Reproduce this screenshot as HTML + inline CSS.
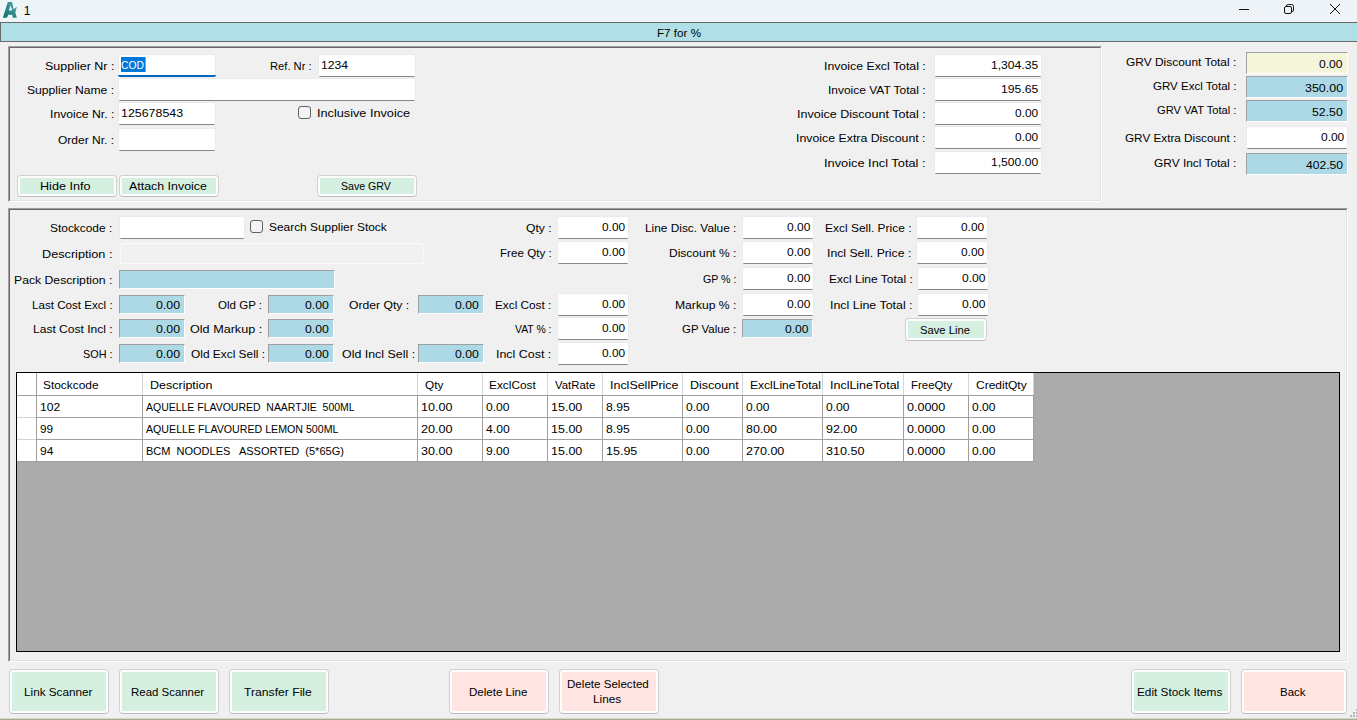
<!DOCTYPE html>
<html><head><meta charset="utf-8"><title>1</title>
<style>
*{box-sizing:border-box;margin:0;padding:0}
html,body{width:1357px;height:720px;overflow:hidden;background:#f0f0f0;font-family:"Liberation Sans",sans-serif;font-size:11px;color:#000}
.a{position:absolute}
.t{position:absolute;white-space:pre;line-height:16px;height:16px;transform-origin:0 0}
.tb{position:absolute;background:#fff;border-bottom:1px solid #868686;box-shadow:-1px -1px 0 0 #ebebeb,1px -1px 0 0 #ebebeb;border-radius:1.5px;height:22px}
.ro{position:absolute;background:#add8e6;border-top:1px solid #a0a0a0;border-left:1px solid #a0a0a0;border-bottom:1px solid #fff;border-right:1px solid #fff}
.btn{position:absolute;border:1px solid #d0d0d0;border-bottom-color:#bdbdbd;border-radius:4px;background:#fdfdfd;padding:2px}
.btn>div{width:100%;height:100%}
.g>div{background:#d5f0e1}.p>div{background:#ffe4e1}
.sb{width:100px;height:22px}.bb{width:100px;height:45px;top:669px}
.panel{position:absolute;border-style:solid;border-width:1px;border-color:#a0a0a0 #fff #fff #a0a0a0}
.panel:before{content:"";position:absolute;left:0;top:0;right:0;bottom:0;border-style:solid;border-width:1px;border-color:#696969 #e3e3e3 #e3e3e3 #696969}
.cb{position:absolute;width:13px;height:13px;border:1px solid #626262;border-radius:3px;background:#f3f3f3}
.s{width:66px;height:19px}
.w70{width:70px}
.v,.h{position:absolute;background:#a0a0a0}
.v{width:1px}.h{height:1px}
</style></head><body>
<!-- title bar -->
<div class="a" style="left:0;top:0;width:1357px;height:22px;background:#eff4f9"></div>
<svg class="a" style="left:0;top:0" width="20" height="20" viewBox="0 0 20 20"><defs><linearGradient id="ig" x1="0" y1="1" x2="1" y2="0"><stop offset="0" stop-color="#04706f"/><stop offset="1" stop-color="#5aa5a4"/></linearGradient></defs><path d="M2.9 17.8 L7.8 2.1 L12.2 2.1 L13.6 9.3 L16.9 6.8 L15.3 12.6 L16.9 17.8 L12.9 17.8 L12.2 14.7 L8.3 14.7 L6.9 17.8 Z M10.2 5.3 L9.0 11.0 L12.4 9.9 Z" fill="url(#ig)" fill-rule="evenodd"/></svg>
<svg class="a" style="left:1230px;top:0" width="127" height="22" viewBox="0 0 127 22"><g fill="none" stroke="#111" stroke-width="1"><path d="M9 9.5 H19"/><rect x="54.5" y="6.5" width="7" height="7" rx="1.5"/><path d="M56.5 6 Q56.6 4.5 58.2 4.5 H61.5 Q63.5 4.5 63.5 6.5 V10 Q63.5 11.4 62 11.5"/><path d="M100 4 L110 14 M110 4 L100 14"/></g></svg>
<!-- blue strip -->
<div class="a" style="left:0;top:22px;width:1357px;height:20px;background:#b0e0e6;border:1px solid #696969;border-right:0"></div>

<!-- panel 1 -->
<div class="panel" style="left:8px;top:46px;width:1094px;height:156px"></div>
<div class="tb" style="left:119px;top:55px;width:96px;border-bottom-color:#fff"></div>
<div class="a" style="left:118px;top:74px;width:98px;height:3px;border-bottom:2px solid #0067c0;border-radius:0 0 2px 2px"></div>
<div class="a" style="left:121px;top:57px;width:24px;height:15px;background:#0078d7"></div>
<div class="a" style="left:145px;top:57px;width:1px;height:15px;background:#ff8c28"></div>
<div class="tb" style="left:319px;top:55px;width:96px"></div>
<div class="tb" style="left:119px;top:79px;width:296px"></div>
<div class="tb" style="left:119px;top:103px;width:96px"></div>
<div class="cb" style="left:298px;top:106px"></div>
<div class="tb" style="left:119px;top:129px;width:96px"></div>
<div class="btn g sb" style="left:17px;top:175px"><div></div></div>
<div class="btn g sb" style="left:119px;top:175px"><div></div></div>
<div class="btn g sb" style="left:317px;top:175px"><div></div></div>

<div class="tb" style="left:935px;top:55px;width:106px"></div>
<div class="tb" style="left:935px;top:79px;width:106px"></div>
<div class="tb" style="left:935px;top:103px;width:106px"></div>
<div class="tb" style="left:935px;top:127px;width:106px"></div>
<div class="tb" style="left:935px;top:152px;width:106px"></div>

<!-- GRV right column -->
<div class="ro" style="left:1246px;top:52px;width:102px;height:22px;background:#f5f5dc"></div>
<div class="ro" style="left:1246px;top:76px;width:102px;height:22px"></div>
<div class="ro" style="left:1246px;top:100px;width:102px;height:22px"></div>
<div class="tb" style="left:1247px;top:127px;width:100px"></div>
<div class="ro" style="left:1246px;top:153px;width:102px;height:22px"></div>

<!-- panel 2 -->
<div class="panel" style="left:8px;top:208px;width:1340px;height:454px"></div>
<div class="tb" style="left:120px;top:217px;width:124px"></div>
<div class="cb" style="left:250px;top:220px"></div>
<div class="a" style="left:120px;top:243px;width:304px;height:21px;border:1px solid #fafafa;border-radius:2px;background:#f1f1f1"></div>
<div class="ro" style="left:119px;top:270px;width:216px;height:19px"></div>

<div class="ro s" style="left:119px;top:295px"></div>
<div class="ro s" style="left:119px;top:319px"></div>
<div class="ro s" style="left:119px;top:344px"></div>
<div class="ro s" style="left:268px;top:295px"></div>
<div class="ro s" style="left:268px;top:319px"></div>
<div class="ro s" style="left:268px;top:344px"></div>
<div class="ro s" style="left:418px;top:295px"></div>
<div class="ro s" style="left:418px;top:344px"></div>

<div class="tb w70" style="left:558px;top:217px"></div>
<div class="tb w70" style="left:558px;top:242px"></div>
<div class="tb w70" style="left:558px;top:294px"></div>
<div class="tb w70" style="left:558px;top:318px"></div>
<div class="tb w70" style="left:558px;top:343px"></div>

<div class="tb w70" style="left:743px;top:217px"></div>
<div class="tb w70" style="left:743px;top:242px"></div>
<div class="tb w70" style="left:743px;top:268px"></div>
<div class="tb w70" style="left:743px;top:294px"></div>
<div class="ro s" style="left:742px;top:319px;width:71px"></div>

<div class="tb w70" style="left:917px;top:217px"></div>
<div class="tb w70" style="left:917px;top:242px"></div>
<div class="tb w70" style="left:918px;top:268px"></div>
<div class="tb w70" style="left:918px;top:294px"></div>
<div class="btn g" style="left:905px;top:318px;width:82px;height:23px"><div></div></div>

<!-- grid -->
<div class="a" style="left:16px;top:372px;width:1324px;height:280px;background:#ababab;border:1px solid #000"></div>
<div class="a" style="left:17px;top:373px;width:1017px;height:89px;background:#fff"></div>
<div class="v" style="left:36px;top:373px;height:89px"></div>
<div class="v" style="left:142px;top:373px;height:22px;background:#d4d4d4"></div>
<div class="v" style="left:142px;top:395px;height:67px"></div>
<div class="v" style="left:417px;top:373px;height:22px;background:#d4d4d4"></div>
<div class="v" style="left:417px;top:395px;height:67px"></div>
<div class="v" style="left:482px;top:373px;height:22px;background:#d4d4d4"></div>
<div class="v" style="left:482px;top:395px;height:67px"></div>
<div class="v" style="left:547px;top:373px;height:22px;background:#d4d4d4"></div>
<div class="v" style="left:547px;top:395px;height:67px"></div>
<div class="v" style="left:602px;top:373px;height:22px;background:#d4d4d4"></div>
<div class="v" style="left:602px;top:395px;height:67px"></div>
<div class="v" style="left:682px;top:373px;height:22px;background:#d4d4d4"></div>
<div class="v" style="left:682px;top:395px;height:67px"></div>
<div class="v" style="left:742px;top:373px;height:22px;background:#d4d4d4"></div>
<div class="v" style="left:742px;top:395px;height:67px"></div>
<div class="v" style="left:822px;top:373px;height:22px;background:#d4d4d4"></div>
<div class="v" style="left:822px;top:395px;height:67px"></div>
<div class="v" style="left:903px;top:373px;height:22px;background:#d4d4d4"></div>
<div class="v" style="left:903px;top:395px;height:67px"></div>
<div class="v" style="left:968px;top:373px;height:22px;background:#d4d4d4"></div>
<div class="v" style="left:968px;top:395px;height:67px"></div>
<div class="v" style="left:1033px;top:373px;height:22px;background:#d4d4d4"></div>
<div class="v" style="left:1033px;top:395px;height:67px"></div>
<div class="h" style="left:17px;top:395px;width:1017px"></div>
<div class="h" style="left:37px;top:417px;width:997px"></div>
<div class="h" style="left:17px;top:417px;width:19px;background:#d4d4d4"></div>
<div class="h" style="left:37px;top:439px;width:997px"></div>
<div class="h" style="left:17px;top:439px;width:19px;background:#d4d4d4"></div>
<div class="h" style="left:17px;top:461px;width:1017px"></div>

<!-- bottom buttons -->
<div class="btn g bb" style="left:9px"><div></div></div>
<div class="btn g bb" style="left:119px"><div></div></div>
<div class="btn g bb" style="left:229px"><div></div></div>
<div class="btn p bb" style="left:449px"><div></div></div>
<div class="btn p bb" style="left:559px"><div></div></div>
<div class="btn g bb" style="left:1131px"><div></div></div>
<div class="btn p bb" style="left:1241px;width:106px"><div></div></div>
<div class="a" style="left:0;top:718px;width:1357px;height:1px;background:#d6d6c8"></div>
<div class="a" style="left:0;top:719px;width:1357px;height:1px;background:#a9aa90"></div>
<svg class="a" style="left:1349px;top:708px" width="8" height="10" viewBox="0 0 8 10" fill="#b4b4b4"><rect x="7" y="1" width="2" height="2"/><rect x="4" y="4" width="2" height="2"/><rect x="7" y="4" width="2" height="2"/><rect x="1" y="7" width="2" height="2"/><rect x="4" y="7" width="2" height="2"/><rect x="7" y="7" width="2" height="2"/></svg>
<div class="t" style="left:23.71px;top:3.00px;font-size:12px">1</div>
<div class="t" style="left:656.50px;top:25.00px;transform:scaleX(1.0580)">F7 for %</div>
<div class="t" style="left:44.96px;top:58.00px;transform:scaleX(1.1354)">Supplier Nr :</div>
<div class="t" style="left:27.32px;top:82.00px;transform:scaleX(1.1042)">Supplier Name :</div>
<div class="t" style="left:49.83px;top:106.00px;transform:scaleX(1.1086)">Invoice Nr. :</div>
<div class="t" style="left:57.76px;top:132.00px;transform:scaleX(1.0903)">Order Nr. :</div>
<div class="t" style="left:270.16px;top:58.00px;transform:scaleX(1.0153)">Ref. Nr :</div>
<div class="t" style="left:121.29px;top:57.00px;transform:scaleX(0.9367);color:#fff">COD</div>
<div class="t" style="left:321.05px;top:57.00px;transform:scaleX(1.1069)">1234</div>
<div class="t" style="left:121.22px;top:105.00px;transform:scaleX(1.1284)">125678543</div>
<div class="t" style="left:317.15px;top:105.00px;transform:scaleX(1.1542)">Inclusive Invoice</div>
<div class="t" style="left:40.35px;top:178.00px;transform:scaleX(1.1453)">Hide Info</div>
<div class="t" style="left:128.85px;top:178.00px;transform:scaleX(1.1277)">Attach Invoice</div>
<div class="t" style="left:341.07px;top:178.00px;transform:scaleX(0.9643)">Save GRV</div>
<div class="t" style="left:823.57px;top:58.00px;transform:scaleX(1.1199)">Invoice Excl Total :</div>
<div class="t" style="left:827.89px;top:82.00px;transform:scaleX(1.0873)">Invoice VAT Total :</div>
<div class="t" style="left:796.79px;top:106.00px;transform:scaleX(1.1398)">Invoice Discount Total :</div>
<div class="t" style="left:795.57px;top:130.00px;transform:scaleX(1.1210)">Invoice Extra Discount :</div>
<div class="t" style="left:823.95px;top:155.00px;transform:scaleX(1.1639)">Invoice Incl Total :</div>
<div class="t" style="left:990.86px;top:57.00px;transform:scaleX(1.1020)">1,304.35</div>
<div class="t" style="left:1001.43px;top:81.00px;transform:scaleX(1.1103)">195.65</div>
<div class="t" style="left:1014.76px;top:105.00px;transform:scaleX(1.0772)">0.00</div>
<div class="t" style="left:1014.76px;top:129.00px;transform:scaleX(1.0772)">0.00</div>
<div class="t" style="left:990.86px;top:154.00px;transform:scaleX(1.1014)">1,500.00</div>
<div class="t" style="left:1126.38px;top:54.00px;transform:scaleX(1.0841)">GRV Discount Total :</div>
<div class="t" style="left:1153.08px;top:78.00px;transform:scaleX(1.0483)">GRV Excl Total :</div>
<div class="t" style="left:1157.10px;top:102.00px;transform:scaleX(1.0112)">GRV VAT Total :</div>
<div class="t" style="left:1124.69px;top:130.00px;transform:scaleX(1.0660)">GRV Extra Discount :</div>
<div class="t" style="left:1153.86px;top:155.00px;transform:scaleX(1.0820)">GRV Incl Total :</div>
<div class="t" style="left:1319.26px;top:56.00px;transform:scaleX(1.1006)">0.00</div>
<div class="t" style="left:1305.07px;top:80.00px;transform:scaleX(1.1327)">350.00</div>
<div class="t" style="left:1311.87px;top:104.00px;transform:scaleX(1.1183)">52.50</div>
<div class="t" style="left:1321.12px;top:129.00px;transform:scaleX(1.0860)">0.00</div>
<div class="t" style="left:1305.89px;top:157.00px;transform:scaleX(1.1018)">402.50</div>
<div class="t" style="left:50.13px;top:220.00px;transform:scaleX(1.0828)">Stockcode :</div>
<div class="t" style="left:42.24px;top:246.00px;transform:scaleX(1.1524)">Description :</div>
<div class="t" style="left:13.62px;top:272.00px;transform:scaleX(1.1097)">Pack Description :</div>
<div class="t" style="left:32.09px;top:297.00px;transform:scaleX(1.0555)">Last Cost Excl :</div>
<div class="t" style="left:33.03px;top:321.00px;transform:scaleX(1.0948)">Last Cost Incl :</div>
<div class="t" style="left:82.81px;top:346.00px;transform:scaleX(0.9843)">SOH :</div>
<div class="t" style="left:155.83px;top:297.00px;transform:scaleX(1.1225)">0.00</div>
<div class="t" style="left:155.83px;top:321.00px;transform:scaleX(1.1225)">0.00</div>
<div class="t" style="left:155.83px;top:346.00px;transform:scaleX(1.1225)">0.00</div>
<div class="t" style="left:268.93px;top:219.00px;transform:scaleX(1.0821)">Search Supplier Stock</div>
<div class="t" style="left:218.44px;top:297.00px;transform:scaleX(1.0496)">Old GP :</div>
<div class="t" style="left:190.07px;top:321.00px;transform:scaleX(1.1464)">Old Markup :</div>
<div class="t" style="left:190.77px;top:346.00px;transform:scaleX(1.0812)">Old Excl Sell :</div>
<div class="t" style="left:305.11px;top:297.00px;transform:scaleX(1.1151)">0.00</div>
<div class="t" style="left:305.11px;top:321.00px;transform:scaleX(1.1151)">0.00</div>
<div class="t" style="left:305.11px;top:346.00px;transform:scaleX(1.1151)">0.00</div>
<div class="t" style="left:348.68px;top:297.00px;transform:scaleX(1.1072)">Order Qty :</div>
<div class="t" style="left:341.67px;top:346.00px;transform:scaleX(1.1279)">Old Incl Sell :</div>
<div class="t" style="left:454.66px;top:297.00px;transform:scaleX(1.1120)">0.00</div>
<div class="t" style="left:454.66px;top:346.00px;transform:scaleX(1.1120)">0.00</div>
<div class="t" style="left:526.06px;top:220.00px;transform:scaleX(1.1041)">Qty :</div>
<div class="t" style="left:500.08px;top:245.00px;transform:scaleX(1.0568)">Free Qty :</div>
<div class="t" style="left:495.31px;top:297.00px;transform:scaleX(1.0716)">Excl Cost :</div>
<div class="t" style="left:515.30px;top:321.00px;transform:scaleX(0.9477)">VAT % :</div>
<div class="t" style="left:496.48px;top:346.00px;transform:scaleX(1.1304)">Incl Cost :</div>
<div class="t" style="left:601.76px;top:219.00px;transform:scaleX(1.0772)">0.00</div>
<div class="t" style="left:601.76px;top:244.00px;transform:scaleX(1.0772)">0.00</div>
<div class="t" style="left:601.76px;top:296.00px;transform:scaleX(1.0772)">0.00</div>
<div class="t" style="left:601.76px;top:320.00px;transform:scaleX(1.0772)">0.00</div>
<div class="t" style="left:601.76px;top:345.00px;transform:scaleX(1.0772)">0.00</div>
<div class="t" style="left:644.65px;top:220.00px;transform:scaleX(1.0778)">Line Disc. Value :</div>
<div class="t" style="left:668.59px;top:245.00px;transform:scaleX(1.0909)">Discount % :</div>
<div class="t" style="left:702.95px;top:271.00px;transform:scaleX(0.9653)">GP % :</div>
<div class="t" style="left:674.58px;top:297.00px;transform:scaleX(1.1034)">Markup % :</div>
<div class="t" style="left:682.33px;top:321.00px;transform:scaleX(1.0394)">GP Value :</div>
<div class="t" style="left:786.87px;top:219.00px;transform:scaleX(1.0907)">0.00</div>
<div class="t" style="left:786.87px;top:244.00px;transform:scaleX(1.0907)">0.00</div>
<div class="t" style="left:786.87px;top:270.00px;transform:scaleX(1.0907)">0.00</div>
<div class="t" style="left:786.87px;top:296.00px;transform:scaleX(1.0907)">0.00</div>
<div class="t" style="left:785.42px;top:321.00px;transform:scaleX(1.1025)">0.00</div>
<div class="t" style="left:825.10px;top:220.00px;transform:scaleX(1.0879)">Excl Sell. Price :</div>
<div class="t" style="left:827.42px;top:245.00px;transform:scaleX(1.1121)">Incl Sell. Price :</div>
<div class="t" style="left:829.03px;top:271.00px;transform:scaleX(1.0903)">Excl Line Total :</div>
<div class="t" style="left:830.04px;top:297.00px;transform:scaleX(1.1282)">Incl Line Total :</div>
<div class="t" style="left:961.49px;top:219.00px;transform:scaleX(1.0781)">0.00</div>
<div class="t" style="left:961.49px;top:244.00px;transform:scaleX(1.0781)">0.00</div>
<div class="t" style="left:961.75px;top:270.00px;transform:scaleX(1.0983)">0.00</div>
<div class="t" style="left:961.75px;top:296.00px;transform:scaleX(1.0983)">0.00</div>
<div class="t" style="left:920.18px;top:322.00px;transform:scaleX(1.0216)">Save Line</div>
<div class="t" style="left:43.20px;top:377.00px;transform:scaleX(1.0822)">Stockcode</div>
<div class="t" style="left:149.96px;top:377.00px;transform:scaleX(1.1360)">Description</div>
<div class="t" style="left:425.06px;top:377.00px;transform:scaleX(1.0748)">Qty</div>
<div class="t" style="left:489.10px;top:377.00px;transform:scaleX(1.0777)">ExclCost</div>
<div class="t" style="left:555.08px;top:377.00px;transform:scaleX(1.0328)">VatRate</div>
<div class="t" style="left:610.03px;top:377.00px;transform:scaleX(1.1321)">InclSellPrice</div>
<div class="t" style="left:689.78px;top:377.00px;transform:scaleX(1.1367)">Discount</div>
<div class="t" style="left:750.03px;top:377.00px;transform:scaleX(1.0941)">ExclLineTotal</div>
<div class="t" style="left:830.19px;top:377.00px;transform:scaleX(1.1341)">InclLineTotal</div>
<div class="t" style="left:911.12px;top:377.00px;transform:scaleX(1.0384)">FreeQty</div>
<div class="t" style="left:975.80px;top:377.00px;transform:scaleX(1.0905)">CreditQty</div>
<div class="t" style="left:40.42px;top:399.00px;transform:scaleX(1.0968)">102</div>
<div class="t" style="left:145.84px;top:399.00px;transform:scaleX(0.9524)">AQUELLE FLAVOURED  NAARTJIE  500ML</div>
<div class="t" style="left:420.61px;top:399.00px;transform:scaleX(1.1388)">10.00</div>
<div class="t" style="left:485.75px;top:399.00px;transform:scaleX(1.0983)">0.00</div>
<div class="t" style="left:550.97px;top:399.00px;transform:scaleX(1.1370)">15.00</div>
<div class="t" style="left:605.50px;top:399.00px;transform:scaleX(1.1061)">8.95</div>
<div class="t" style="left:686.03px;top:399.00px;transform:scaleX(1.0946)">0.00</div>
<div class="t" style="left:746.03px;top:399.00px;transform:scaleX(1.0946)">0.00</div>
<div class="t" style="left:826.05px;top:399.00px;transform:scaleX(1.0983)">0.00</div>
<div class="t" style="left:907.23px;top:399.00px;transform:scaleX(1.1375)">0.0000</div>
<div class="t" style="left:972.22px;top:399.00px;transform:scaleX(1.0946)">0.00</div>
<div class="t" style="left:39.71px;top:421.00px;transform:scaleX(1.0658)">99</div>
<div class="t" style="left:145.85px;top:421.00px;transform:scaleX(0.9664)">AQUELLE FLAVOURED LEMON 500ML</div>
<div class="t" style="left:420.81px;top:421.00px;transform:scaleX(1.1472)">20.00</div>
<div class="t" style="left:486.40px;top:421.00px;transform:scaleX(1.1053)">4.00</div>
<div class="t" style="left:550.97px;top:421.00px;transform:scaleX(1.1370)">15.00</div>
<div class="t" style="left:605.50px;top:421.00px;transform:scaleX(1.1061)">8.95</div>
<div class="t" style="left:686.03px;top:421.00px;transform:scaleX(1.0946)">0.00</div>
<div class="t" style="left:745.57px;top:421.00px;transform:scaleX(1.1267)">80.00</div>
<div class="t" style="left:825.61px;top:421.00px;transform:scaleX(1.1324)">92.00</div>
<div class="t" style="left:907.23px;top:421.00px;transform:scaleX(1.1375)">0.0000</div>
<div class="t" style="left:972.22px;top:421.00px;transform:scaleX(1.0946)">0.00</div>
<div class="t" style="left:39.63px;top:443.00px;transform:scaleX(1.0885)">94</div>
<div class="t" style="left:146.01px;top:443.00px">BCM  NOODLES   ASSORTED  (5*65G)</div>
<div class="t" style="left:421.00px;top:443.00px;transform:scaleX(1.1407)">30.00</div>
<div class="t" style="left:486.46px;top:443.00px;transform:scaleX(1.0990)">9.00</div>
<div class="t" style="left:550.97px;top:443.00px;transform:scaleX(1.1370)">15.00</div>
<div class="t" style="left:605.77px;top:443.00px;transform:scaleX(1.1382)">15.95</div>
<div class="t" style="left:686.03px;top:443.00px;transform:scaleX(1.0946)">0.00</div>
<div class="t" style="left:745.57px;top:443.00px;transform:scaleX(1.1389)">270.00</div>
<div class="t" style="left:826.25px;top:443.00px;transform:scaleX(1.1420)">310.50</div>
<div class="t" style="left:907.23px;top:443.00px;transform:scaleX(1.1375)">0.0000</div>
<div class="t" style="left:972.22px;top:443.00px;transform:scaleX(1.0946)">0.00</div>
<div class="t" style="left:24.07px;top:684.00px;transform:scaleX(1.0667)">Link Scanner</div>
<div class="t" style="left:130.74px;top:684.00px;transform:scaleX(1.0401)">Read Scanner</div>
<div class="t" style="left:243.70px;top:684.00px;transform:scaleX(1.1061)">Transfer File</div>
<div class="t" style="left:468.87px;top:684.00px;transform:scaleX(1.0495)">Delete Line</div>
<div class="t" style="left:567.12px;top:676.00px;transform:scaleX(1.0528)">Delete Selected</div>
<div class="t" style="left:593.31px;top:691.00px;transform:scaleX(1.0736)">Lines</div>
<div class="t" style="left:1137.03px;top:684.00px;transform:scaleX(1.0732)">Edit Stock Items</div>
<div class="t" style="left:1279.86px;top:684.00px;transform:scaleX(1.0454)">Back</div>
</body></html>
